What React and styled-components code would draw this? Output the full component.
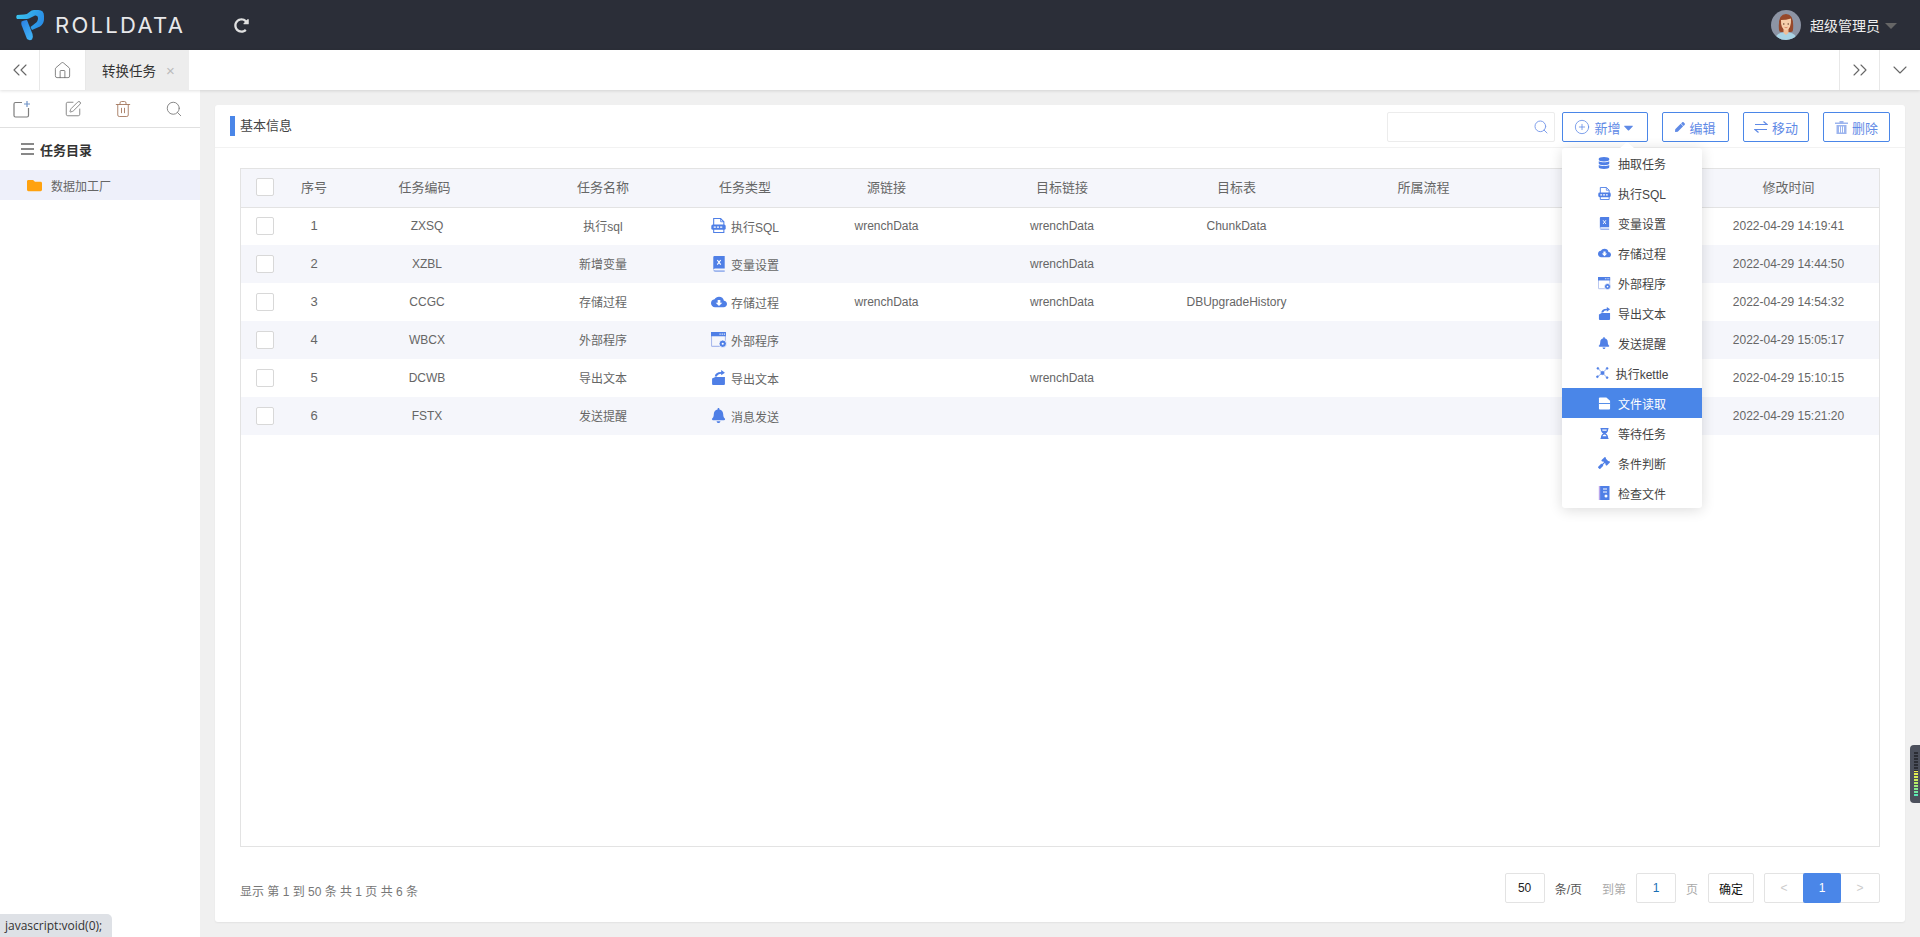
import React from "react";
import styled, { createGlobalStyle } from "styled-components";
import {
  ChevronsLeft,
  ChevronsRight,
  ChevronDown,
  Home,
  Search,
  SquarePen,
  Trash2,
  CirclePlus,
} from "lucide-react";
import {
  FaDatabase,
  FaBell,
  FaFolder,
  FaRedoAlt,
  FaPen,
  FaGavel,
  FaHourglassHalf,
  FaCaretDown,
} from "react-icons/fa";
import { MdCloudDownload } from "react-icons/md";

const BLUE = "#4a86e8";
const ICON = "#4f7fe6";

const GlobalStyle = createGlobalStyle`
  html, body {
    margin: 0;
    padding: 0;
    height: 100%;
    overflow: hidden;
  }
  body {
    font-family: "Liberation Sans", "Noto Sans CJK SC", sans-serif;
    font-size: 12px;
    color: #666;
    background: #f0f0f0;
  }
  * {
    box-sizing: border-box;
  }
`;

const Page = styled.div`
  height: 937px;
  display: flex;
  flex-direction: column;
`;

const Header = styled.header`
  height: 50px;
  flex: none;
  background: #2b2e38;
  display: flex;
  align-items: center;
  padding: 0 23px 0 16px;
`;

const Brand = styled.div`
  display: flex;
  align-items: center;
  gap: 10px;
  width: 218px;
`;

const BrandName = styled.span`
  font-family: Inter, "Liberation Sans", sans-serif;
  font-size: 22px;
  letter-spacing: 2.3px;
  color: #e8e8ea;
`;

const Refresh = styled.span`
  display: flex;
  color: #e0e0e0;
  font-size: 15px;
`;

const UserBox = styled.div`
  margin-left: auto;
  display: flex;
  align-items: center;
  color: #eee;
  font-size: 14px;
  gap: 9px;
`;

const Caret = styled.i`
  width: 0;
  height: 0;
  margin-left: -4px;
  margin-top: 2px;
  border-left: 6px solid transparent;
  border-right: 6px solid transparent;
  border-top: 6px solid #666;
`;

const TabBar = styled.nav`
  height: 40px;
  flex: none;
  background: #fff;
  display: flex;
  box-shadow: 0 1px 3px rgba(0, 0, 0, 0.12);
  position: relative;
  z-index: 2;
`;

const TabIcon = styled.div`
  width: ${(p) => p.$w || 40}px;
  display: flex;
  align-items: center;
  justify-content: center;
  color: #666;
  border-right: ${(p) => (p.$right ? "none" : "1px solid #e8e8e8")};
  border-left: ${(p) => (p.$right ? "1px solid #e8e8e8" : "none")};
`;

const Tab = styled.div`
  width: 103px;
  background: #ededed;
  display: flex;
  align-items: center;
  padding-left: 16px;
  font-size: 13.5px;
  color: #333;
`;

const TabClose = styled.span`
  margin-left: 10px;
  color: #bbb;
  font-size: 15px;
`;

const TabSpacer = styled.div`
  flex: 1;
`;

const Body = styled.div`
  flex: 1;
  display: flex;
  min-height: 0;
`;

const Sidebar = styled.aside`
  width: 200px;
  flex: none;
  background: #fff;
`;

const SideTools = styled.div`
  height: 38px;
  display: flex;
  align-items: center;
  justify-content: space-between;
  padding: 0 17px 0 13px;
  border-bottom: 1px solid #e0e0e0;
  color: #7d7d7d;
`;

const TreeTitle = styled.div`
  height: 42px;
  display: flex;
  align-items: center;
  gap: 6px;
  padding-left: 21px;
  font-size: 13px;
  font-weight: bold;
  color: #333;
`;

const Burger = styled.i`
  width: 13px;
  height: 12px;
  border-top: 2px solid #888;
  border-bottom: 2px solid #888;
  position: relative;
  &::after {
    content: "";
    position: absolute;
    left: 0;
    right: 0;
    top: 3px;
    height: 2px;
    background: #888;
  }
`;

const TreeItem = styled.div`
  height: 30px;
  background: #eef0fa;
  display: flex;
  align-items: center;
  gap: 9px;
  padding-left: 27px;
  color: #666;
  svg {
    color: #ffa20f;
    font-size: 15px;
  }
`;

const Main = styled.main`
  flex: 1;
  min-width: 0;
  padding: 15px 15px 15px 15px;
`;

const Card = styled.section`
  height: 817px;
  background: #fff;
  border-radius: 3px;
  box-shadow: 0 1px 2px rgba(0, 0, 0, 0.06);
  display: flex;
  flex-direction: column;
`;

const CardHead = styled.div`
  height: 43px;
  flex: none;
  display: flex;
  align-items: center;
  padding: 2px 15px 0;
  border-bottom: 1px solid #f2f2f2;
`;

const CardTitle = styled.h3`
  margin: -2px 0 0;
  font-size: 13px;
  font-weight: normal;
  color: #444;
  border-left: 5px solid ${BLUE};
  padding-left: 5px;
  line-height: 20px;
`;

const SearchBox = styled.div`
  margin-left: auto;
  width: 168px;
  height: 30px;
  border: 1px solid #ececec;
  border-radius: 2px;
  display: flex;
  align-items: center;
  justify-content: flex-end;
  padding-right: 5px;
  color: #7f9fec;
`;

const ToolButton = styled.button`
  height: 30px;
  width: ${(p) => p.$w}px;
  margin-left: ${(p) => p.$gap}px;
  background: #fff;
  border: 1px solid ${BLUE};
  border-radius: 2px;
  color: #5f8ae6;
  font: inherit;
  font-size: 13px;
  display: flex;
  align-items: center;
  justify-content: center;
  gap: 4px;
  padding: 0;
`;

const CaretIcon = styled(FaCaretDown)`
  margin-left: -4px;
`;

const Dropdown = styled.div`
  position: relative;
`;

const Menu = styled.ul`
  position: absolute;
  z-index: 5;
  top: 36px;
  left: 7px;
  width: 140px;
  margin: 0;
  padding: 0;
  list-style: none;
  background: #fff;
  border-radius: 3px;
  box-shadow: 0 2px 14px rgba(0, 0, 0, 0.14);
  &::before {
    content: "";
    position: absolute;
    left: 58px;
    top: -6px;
    border-left: 7px solid transparent;
    border-right: 7px solid transparent;
    border-bottom: 6px solid #fff;
  }
`;

const MenuItem = styled.li`
  height: 30px;
  display: flex;
  align-items: center;
  justify-content: center;
  gap: 7px;
  font-size: 12px;
  color: ${(p) => (p.$active ? "#fff" : "#444")};
  background: ${(p) => (p.$active ? BLUE : "transparent")};
  span {
    display: flex;
    width: 13px;
    justify-content: center;
    color: ${(p) => (p.$active ? "#fff" : ICON)};
  }
`;

const TableWrap = styled.div`
  margin: 20px 25px 0;
  width: 1640px;
  height: 679px;
  flex: none;
  border: 1px solid #e3e3e3;
`;

const Table = styled.table`
  width: 100%;
  table-layout: fixed;
  border-collapse: collapse;
`;

const Th = styled.th`
  height: 38px;
  padding: 0 0 2px ${(p) => p.$indent || 0}px;
  background: #f5f6fb;
  border-bottom: 1px solid #e3e3e3;
  font-size: 13px;
  font-weight: normal;
  color: #666;
  text-align: center;
`;

const Row = styled.tr`
  background: ${(p) => (p.$alt ? "#f5f6fb" : "#fff")};
`;

const Td = styled.td`
  height: 38px;
  padding: 0 0 1px ${(p) => p.$indent || 0}px;
  font-size: ${(p) => (p.$large ? 13 : 12)}px;
  color: #666;
  text-align: center;
  white-space: nowrap;
`;

const Check = styled.i`
  display: block;
  width: 18px;
  height: 18px;
  margin: 0 auto;
  background: #fff;
  border: 1px solid #d8d8d8;
  border-radius: 2px;
`;

const TypeCell = styled.div`
  display: flex;
  align-items: center;
  justify-content: center;
  gap: 4px;
  padding-top: 2px;
  span {
    display: flex;
    width: 16px;
    justify-content: center;
    color: ${ICON};
    margin-top: -2px;
  }
`;

const Footer = styled.footer`
  display: flex;
  align-items: center;
  padding: 26px 25px 0;
`;

const Summary = styled.div`
  color: #777;
  padding-top: 5px;
`;

const Pager = styled.div`
  margin-left: auto;
  display: flex;
  align-items: center;
  font-size: 12px;
`;

const PageBox = styled.div`
  width: ${(p) => p.$w || 40}px;
  height: 30px;
  margin-left: ${(p) => p.$gap || 0}px;
  border: 1px solid #e3e3e3;
  border-radius: 2px;
  display: flex;
  align-items: center;
  justify-content: center;
  font-size: 12px;
  color: ${(p) => p.$color || "#222"};
`;

const PageText = styled.span`
  margin-left: ${(p) => p.$gap}px;
  color: ${(p) => p.$color};
`;

const PageNav = styled.div`
  display: flex;
  margin-left: 10px;
  height: 30px;
  border: 1px solid #e3e3e3;
  border-radius: 2px;
`;

const PageLink = styled.div`
  width: 38px;
  margin: ${(p) => (p.$active ? "-1px 0" : 0)};
  display: flex;
  align-items: center;
  justify-content: center;
  font-size: 12px;
  border-radius: 2px;
  color: ${(p) => (p.$active ? "#fff" : "#ccc")};
  background: ${(p) => (p.$active ? BLUE : "transparent")};
`;

const StatusBubble = styled.div`
  position: fixed;
  left: 0;
  bottom: 0;
  width: 112px;
  height: 23px;
  padding: 0 5px;
  display: flex;
  align-items: center;
  background: #dee1e6;
  border-top-right-radius: 5px;
  font-family: "Open Sans", sans-serif;
  color: #333;
  z-index: 9;
`;

const MeterTab = styled.div`
  position: fixed;
  right: 0;
  top: 745px;
  width: 10px;
  height: 58px;
  padding: 6px 2px 6px 4px;
  background: #4c505c;
  border-radius: 4px 0 0 4px;
  z-index: 9;
`;

const MeterBars = styled.div`
  width: 4px;
  height: 100%;
  background:
    repeating-linear-gradient(to bottom, #4c505c 0, #4c505c 1px, transparent 1px, transparent 3px),
    linear-gradient(to bottom, #2b2d34 0, #2b2d34 44%, #f0ee4a 44%, #c0ee60 68%, #48e6c0 100%);
`;

const Logo = () => (
  <svg width="29" height="31" viewBox="0 0 29 31">
    <defs>
      <linearGradient id="logoTop" x1="0" y1="0" x2="1" y2="0.3">
        <stop offset="0" stopColor="#3cc8ee" />
        <stop offset="1" stopColor="#2a8fe6" />
      </linearGradient>
      <linearGradient id="logoLeg" x1="0" y1="0" x2="0.6" y2="1">
        <stop offset="0" stopColor="#2b7fe4" />
        <stop offset="1" stopColor="#3eb0f4" />
      </linearGradient>
    </defs>
    <path
      d="M1 9 Q-.5 7 1 5 L8 4.500 Q11 4.500 13.500 2 Q15.500 0 18 0 H22.500 Q28 0 28 6 V9 Q28 14 24 16.500 L16 20 L14.500 17 L19 13.500 Q22 11.500 22 8 Q22 5 19 5.500 L13 8.500 Q11 9 9 9 Z"
      fill="url(#logoTop)"
    />
    <path
      d="M5.500 11.500 Q8 10 11 10 L16.500 24 Q17.500 27 16 29.500 Q13.500 31 11 29 L5.500 15 Q5 13 5.500 11.500 Z"
      fill="url(#logoLeg)"
    />
  </svg>
);

const Avatar = () => (
  <svg width="30" height="30" viewBox="0 0 30 30">
    <clipPath id="avatarClip">
      <circle cx="15" cy="15" r="15" />
    </clipPath>
    <g clipPath="url(#avatarClip)">
      <rect width="30" height="30" fill="#8d94a4" />
      <path d="M8 20 Q6.500 4 15 4 Q23.500 4 22 20 Q22 22 20 22 H10 Q8 22 8 20 Z" fill="#97482a" />
      <path d="M4 30 Q5 23 12 22.500 H18 Q25 23 26 30 Z" fill="#a9d3e4" />
      <path d="M12.500 18 H17.500 V23 L15 25 L12.500 23 Z" fill="#f0bd97" />
      <path d="M10 10 Q15 10 20 8.500 Q20.500 19 15 20.500 Q9.500 19 10 10 Z" fill="#f7cfaa" />
      <circle cx="12.800" cy="14" r="0.7" fill="#55301c" />
      <circle cx="17.200" cy="14" r="0.7" fill="#55301c" />
      <path d="M13.500 17.300 Q15 18.200 16.500 17.300" stroke="#c8694c" strokeWidth="0.7" fill="none" />
    </g>
  </svg>
);

const NewSquare = () => (
  <svg width="18" height="18" viewBox="0 0 18 18" fill="none" stroke="currentColor" strokeWidth="1.200">
    <path d="M9 2.500 H2.500 Q1 2.500 1 4 V15.500 Q1 17 2.500 17 H14 Q15.500 17 15.500 15.500 V8" />
    <path d="M14 1 V7 M11 4 H17" stroke="#6f93c8" />
  </svg>
);

const SwapArrows = () => (
  <svg width="14" height="14" viewBox="0 0 14 14" fill="none" stroke="currentColor" strokeWidth="1.200">
    <path d="M1 4.500 H13 L9.500 1.500" />
    <path d="M13 9.500 H1 L4.500 12.500" />
  </svg>
);

const TrashSolid = () => (
  <svg width="13" height="13" viewBox="0 0 13 13" fill="#9db5ee">
    <path d="M4.500 0 H8.500 V1.500 H13 V3 H0 V1.500 H4.500 Z" />
    <path d="M1.500 4 H11.500 V13 H1.500 Z M4 5.500 V11.500 H5 V5.500 Z M6 5.500 V11.500 H7 V5.500 Z M8 5.500 V11.500 H9 V5.500 Z" fillRule="evenodd" />
  </svg>
);

const SqlFile = ({ size = 14 }) => (
  <svg width={size} height={size} viewBox="0 0 14 14">
    <path d="M2.500 .5 H9 L12 3.500 V13.500 H2.500 Z" fill="#fff" stroke="currentColor" strokeWidth="1" />
    <path d="M9 .5 V3.500 H12" fill="none" stroke="currentColor" strokeWidth="0.800" />
    <rect x="0.300" y="6" width="13.400" height="5" rx="1.500" fill="currentColor" />
    <path d="M2.500 8.500 H11.500" stroke="#fff" strokeWidth="1.200" strokeDasharray="2 1" />
  </svg>
);

const ExcelBook = ({ size = 14 }) => (
  <svg width={size} height={size} viewBox="0 0 14 14">
    <path d="M2 1 Q2 0 3 0 H12 V11 H3.500 Q2 11 2 12.500 Z" fill="currentColor" />
    <path d="M2 12 Q2 14 4 14 H12 V12.500 H4" fill="#9db5ee" />
    <path d="M5.500 3.500 L8.500 7.500 M8.500 3.500 L5.500 7.500" stroke="#fff" strokeWidth="1" />
  </svg>
);

const AppWindow = ({ size = 14 }) => (
  <svg width={size} height={size} viewBox="0 0 15 15">
    <rect x="0.500" y="0.500" width="13" height="13" rx="0.500" fill="none" stroke="#a9b9ec" strokeWidth="1" />
    <rect x="0" y="0" width="14" height="4" fill="currentColor" />
    <path d="M8 2 H13" stroke="#fff" strokeWidth="1" strokeDasharray="1 1" />
    <circle cx="11" cy="11" r="3.500" fill="currentColor" stroke="#fff" strokeWidth="0.800" />
    <circle cx="11" cy="11" r="1" fill="#fff" />
  </svg>
);

const ExportFolder = ({ size = 14 }) => (
  <svg width={size} height={size} viewBox="0 0 14 14">
    <path d="M1 8 L4 6.500 H13 V13 Q13 14 12 14 H2 Q1 14 1 13 Z" fill="currentColor" />
    <path d="M3.500 6 Q4 2 9.500 1.800 L9.500 0 L13 2.500 L9.500 5 L9.500 3.500 Q6.500 3.500 5.500 6 Z" fill="currentColor" />
  </svg>
);

const Nodes = () => (
  <svg width="14" height="14" viewBox="0 0 14 14" fill="currentColor" stroke="currentColor" strokeWidth="0.700">
    <path d="M7 7 L2 2 M7 7 L12 2 M7 7 L1.500 11 M7 7 L12 12" />
    <circle cx="7" cy="7" r="1.800" />
    <circle cx="2" cy="2" r="1" />
    <circle cx="12" cy="2" r="1" />
    <circle cx="1.500" cy="11" r="1" />
    <circle cx="12" cy="12" r="1" />
  </svg>
);

const DocFold = () => (
  <svg width="14" height="13" viewBox="0 0 14 13" fill="currentColor">
    <path d="M1 1 Q1 0 2 0 H9 L13 3.500 V12 Q13 13 12 13 H2 Q1 13 1 12 Z" />
    <rect x="1" y="6" width="12" height="1" fill="#4a86e8" />
  </svg>
);

const CheckDoc = () => (
  <svg width="13" height="14" viewBox="0 0 13 14">
    <path d="M1.500 0 H11.500 V14 H1.500 Z" fill="currentColor" />
    <path d="M1.500 0 V14" stroke="#b9a7ec" strokeWidth="1.400" />
    <path d="M5 3 H9 M5 6 H9" stroke="#fff" strokeWidth="1" />
    <circle cx="8" cy="10" r="1.500" fill="#fff" />
  </svg>
);

const menuItems = [
  { label: "抽取任务", icon: <FaDatabase size={12} /> },
  { label: "执行SQL", icon: <SqlFile size={13} /> },
  { label: "变量设置", icon: <ExcelBook size={13} /> },
  { label: "存储过程", icon: <MdCloudDownload size={14} /> },
  { label: "外部程序", icon: <AppWindow size={13} /> },
  { label: "导出文本", icon: <ExportFolder size={13} /> },
  { label: "发送提醒", icon: <FaBell size={12} /> },
  { label: "执行kettle", icon: <Nodes /> },
  { label: "文件读取", icon: <DocFold />, active: true },
  { label: "等待任务", icon: <FaHourglassHalf size={11} /> },
  { label: "条件判断", icon: <FaGavel size={12} /> },
  { label: "检查文件", icon: <CheckDoc /> },
];

const rows = [
  { code: "ZXSQ", name: "执行sql", type: "执行SQL", icon: <SqlFile size={15} />, src: "wrenchData", dst: "wrenchData", table: "ChunkData", time: "2022-04-29 14:19:41" },
  { code: "XZBL", name: "新增变量", type: "变量设置", icon: <ExcelBook size={16} />, src: "", dst: "wrenchData", table: "", time: "2022-04-29 14:44:50" },
  { code: "CCGC", name: "存储过程", type: "存储过程", icon: <MdCloudDownload size={16} />, src: "wrenchData", dst: "wrenchData", table: "DBUpgradeHistory", time: "2022-04-29 14:54:32" },
  { code: "WBCX", name: "外部程序", type: "外部程序", icon: <AppWindow size={16} />, src: "", dst: "", table: "", time: "2022-04-29 15:05:17" },
  { code: "DCWB", name: "导出文本", type: "导出文本", icon: <ExportFolder size={15} />, src: "", dst: "wrenchData", table: "", time: "2022-04-29 15:10:15" },
  { code: "FSTX", name: "发送提醒", type: "消息发送", icon: <FaBell size={15} />, src: "", dst: "", table: "", time: "2022-04-29 15:21:20" },
];

const columns = [
  { title: "", width: 48 },
  { title: "序号", width: 50 },
  { title: "任务编码", width: 166, indent: 5 },
  { title: "任务名称", width: 196 },
  { title: "任务类型", width: 88 },
  { title: "源链接", width: 195 },
  { title: "目标链接", width: 156 },
  { title: "目标表", width: 193 },
  { title: "所属流程", width: 181 },
  { title: "", width: 184 },
  { title: "修改时间" },
];

export default function App() {
  return (
    <Page>
      <GlobalStyle />
      <Header>
        <Brand>
          <Logo />
          <BrandName>ROLLDATA</BrandName>
        </Brand>
        <Refresh>
          <FaRedoAlt />
        </Refresh>
        <UserBox>
          <Avatar />
          超级管理员
          <Caret />
        </UserBox>
      </Header>

      <TabBar>
        <TabIcon>
          <ChevronsLeft size={24} strokeWidth={1.1} />
        </TabIcon>
        <TabIcon $w={46}>
          <Home size={19} strokeWidth={1} />
        </TabIcon>
        <Tab>
          转换任务
          <TabClose>×</TabClose>
        </Tab>
        <TabSpacer />
        <TabIcon $right>
          <ChevronsRight size={24} strokeWidth={1.1} />
        </TabIcon>
        <TabIcon $right $w={41}>
          <ChevronDown size={24} strokeWidth={1.1} />
        </TabIcon>
      </TabBar>

      <Body>
        <Sidebar>
          <SideTools>
            <NewSquare />
            <SquarePen size={18} strokeWidth={1.2} />
            <Trash2 size={18} strokeWidth={1.2} color="#a5785f" />
            <Search size={18} strokeWidth={1.2} />
          </SideTools>
          <TreeTitle>
            <Burger />
            任务目录
          </TreeTitle>
          <TreeItem>
            <FaFolder />
            数据加工厂
          </TreeItem>
        </Sidebar>

        <Main>
          <Card>
            <CardHead>
              <CardTitle>基本信息</CardTitle>
              <SearchBox>
                <Search size={16} strokeWidth={1.5} />
              </SearchBox>
              <Dropdown>
                <ToolButton $w={86} $gap={7}>
                  <CirclePlus size={16} strokeWidth={1.2} />
                  新增
                  <CaretIcon size={15} />
                </ToolButton>
                <Menu>
                  {menuItems.map((item) => (
                    <MenuItem key={item.label} $active={item.active}>
                      <span>{item.icon}</span>
                      {item.label}
                    </MenuItem>
                  ))}
                </Menu>
              </Dropdown>
              <ToolButton $w={67} $gap={14}>
                <FaPen size={10} />
                编辑
              </ToolButton>
              <ToolButton $w={66} $gap={14}>
                <SwapArrows />
                移动
              </ToolButton>
              <ToolButton $w={67} $gap={14}>
                <TrashSolid />
                删除
              </ToolButton>
            </CardHead>

            <TableWrap>
              <Table>
                <colgroup>
                  {columns.map((c, i) => (
                    <col key={i} width={c.width} />
                  ))}
                </colgroup>
                <thead>
                  <tr>
                    {columns.map((c, i) => (
                      <Th key={i} $indent={c.indent}>{i === 0 ? <Check /> : c.title}</Th>
                    ))}
                  </tr>
                </thead>
                <tbody>
                  {rows.map((r, i) => (
                    <Row key={r.code} $alt={i % 2 === 1}>
                      <Td>
                        <Check />
                      </Td>
                      <Td $large>{i + 1}</Td>
                      <Td $indent={10}>{r.code}</Td>
                      <Td>{r.name}</Td>
                      <Td>
                        <TypeCell>
                          <span>{r.icon}</span>
                          {r.type}
                        </TypeCell>
                      </Td>
                      <Td>{r.src}</Td>
                      <Td>{r.dst}</Td>
                      <Td>{r.table}</Td>
                      <Td />
                      <Td />
                      <Td>{r.time}</Td>
                    </Row>
                  ))}
                </tbody>
              </Table>
            </TableWrap>

            <Footer>
              <Summary>显示 第 1 到 50 条 共 1 页 共 6 条</Summary>
              <Pager>
                <PageBox>50</PageBox>
                <PageText $gap={10} $color="#555">条/页</PageText>
                <PageText $gap={20} $color="#aaa">到第</PageText>
                <PageBox $gap={10} $color="#1a6fb5">1</PageBox>
                <PageText $gap={10} $color="#aaa">页</PageText>
                <PageBox $gap={10} $w={46} $color="#111">确定</PageBox>
                <PageNav>
                  <PageLink>&lt;</PageLink>
                  <PageLink $active>1</PageLink>
                  <PageLink>&gt;</PageLink>
                </PageNav>
              </Pager>
            </Footer>
          </Card>
        </Main>
      </Body>

      <StatusBubble>javascript:void(0);</StatusBubble>
      <MeterTab>
        <MeterBars />
      </MeterTab>
    </Page>
  );
}
